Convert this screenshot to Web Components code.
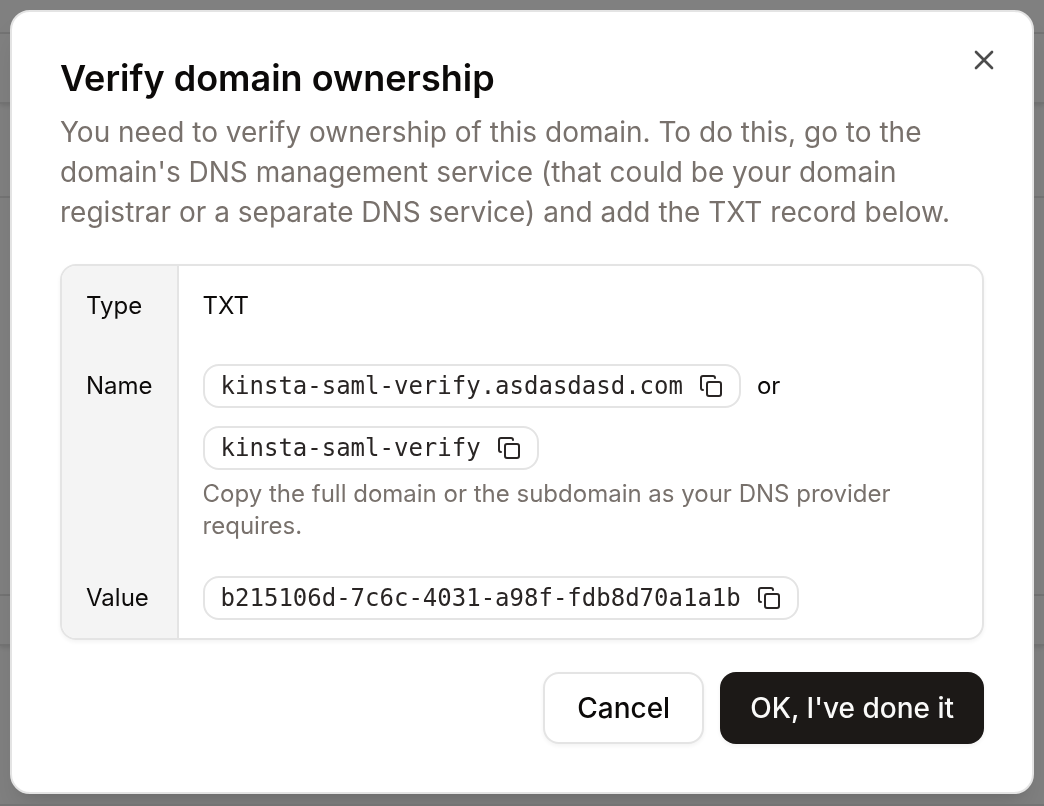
<!DOCTYPE html>
<html lang="en">
<head>
<meta charset="utf-8">
<meta name="viewport" content="width=device-width, initial-scale=1">
<title>Verify domain ownership</title>
<style>
    body {
        margin: 0;
        background: #808080;
        color: #0c0a09;
        font-family: Inter, "Liberation Sans", sans-serif;
        font-size: 24px;
        line-height: 32px;
    }
</style>
</head>
<body>
<page-backdrop></page-backdrop>
<modal-dialog>
    <span slot="title">Verify domain ownership</span>
    <span slot="description">You need to verify ownership of this domain. To do this, go to the domain's DNS management service (that could be your domain registrar or a separate DNS service) and add the TXT record below.</span>
    <dns-record type="TXT" host="kinsta-saml-verify" domain="asdasdasd.com" value="b215106d-7c6c-4031-a98f-fdb8d70a1a1b">
        Copy the full domain or the subdomain as your DNS provider requires.
    </dns-record>
    <dialog-button slot="actions">Cancel</dialog-button>
    <dialog-button slot="actions" primary>OK, I've done it</dialog-button>
</modal-dialog>

<script>
// Dimmed page rows that show around the edge of the dialog
class PageBackdrop extends HTMLElement {
    constructor() {
        super();
        this.attachShadow({mode: 'open'});
        this.shadowRoot.innerHTML = `
            <style>
                :host {
                    position: fixed;
                    inset: 0;
                    display: grid;
                    grid-template-rows: 34fr 70fr 94fr 398fr 50fr 160fr;
                }
                div {
                    border-bottom: 2px solid #747474;
                }
                .card {
                    box-shadow: 0 2px 4px #0000001a;
                }
            </style>
            <div></div>
            <div class="card"></div>
            <div></div>
            <div></div>
            <div class="card"></div>
            <div></div>
        `;
    }
}

class ModalDialog extends HTMLElement {
    constructor() {
        super();
        this.attachShadow({mode: 'open'});
        this.shadowRoot.innerHTML = `
            <style>
                :host {
                    display: block;
                    padding: 10px;
                }
                .dialog {
                    position: relative;
                    background: #fff;
                    border: 2px solid #e4e4e4;
                    border-radius: 20px;
                    padding: 48px;
                    box-shadow: 0 20px 30px -6px #0000001a, 0 8px 12px -8px #0000001a;
                    display: flex;
                    flex-direction: column;
                    gap: 32px;
                }
                header {
                    display: flex;
                    flex-direction: column;
                    gap: 16px;
                }
                h1 {
                    margin: 0;
                    font-size: 36px;
                    line-height: 36px;
                    font-weight: 600;
                }
                p {
                    margin: 0;
                    font-size: 28px;
                    line-height: 40px;
                    color: #78716c;
                }
                footer {
                    display: flex;
                    justify-content: flex-end;
                    gap: 16px;
                }
                .close {
                    position: absolute;
                    top: 32px;
                    right: 32px;
                    padding: 0;
                    border: 0;
                    background: none;
                    color: #4c4c4c;
                    cursor: pointer;
                }
                svg {
                    display: block;
                }
            </style>
            <section class="dialog" role="dialog" aria-labelledby="title" aria-describedby="description">
                <header>
                    <h1 id="title"><slot name="title"></slot></h1>
                    <p id="description"><slot name="description"></slot></p>
                </header>
                <slot></slot>
                <footer><slot name="actions"></slot></footer>
                <button class="close" type="button" aria-label="Close">
                    <svg width="32" height="32" viewBox="0 0 24 24" fill="none" stroke="currentColor" stroke-width="2" stroke-linecap="round" stroke-linejoin="round">
                        <path d="M18 6 6 18M6 6l12 12"/>
                    </svg>
                </button>
            </section>
        `;

        this.shadowRoot.querySelector('.close').addEventListener('click', () => this.close());
    }

    close() {
        this.remove();
    }
}

class DnsRecord extends HTMLElement {
    constructor() {
        super();
        this.attachShadow({mode: 'open'});
        const host = this.getAttribute('host');
        this.shadowRoot.innerHTML = `
            <style>
                :host {
                    display: block;
                    border: 2px solid #e4e4e4;
                    border-radius: 16px;
                    overflow: hidden;
                    box-shadow: 0 2px 4px #0000000d;
                }
                table {
                    width: 100%;
                    border-collapse: separate;
                    border-spacing: 0;
                }
                tr {
                    height: 80px;
                }
                th, td {
                    padding: 24px 24px 16px;
                    vertical-align: top;
                    text-align: left;
                    font-weight: 400;
                }
                th {
                    width: 1px;
                    background: #f4f4f4;
                    border-right: 2px solid #e4e4e4;
                }
                .copyable {
                    padding-top: 18px;
                }
                .names {
                    display: flex;
                    flex-wrap: wrap;
                    align-items: center;
                    gap: 18px 16px;
                }
                .hint {
                    margin: 8px 0 0;
                    color: #78716c;
                }
            </style>
            <table>
                <tr>
                    <th scope="row">Type</th>
                    <td>${this.getAttribute('type')}</td>
                </tr>
                <tr>
                    <th scope="row">Name</th>
                    <td class="copyable">
                        <div class="names">
                            <copy-chip>${host}.${this.getAttribute('domain')}</copy-chip>
                            <span>or</span>
                            <copy-chip>${host}</copy-chip>
                        </div>
                        <p class="hint"><slot></slot></p>
                    </td>
                </tr>
                <tr>
                    <th scope="row">Value</th>
                    <td class="copyable"><copy-chip>${this.getAttribute('value')}</copy-chip></td>
                </tr>
            </table>
        `;
    }
}

class CopyChip extends HTMLElement {
    constructor() {
        super();
        this.attachShadow({mode: 'open'});
        this.shadowRoot.innerHTML = `
            <style>
                :host {
                    display: flex;
                    align-items: center;
                    gap: 16px;
                    width: fit-content;
                    padding: 4px 16px;
                    border: 2px solid #e4e4e4;
                    border-radius: 16px;
                    color: #292524;
                }
                code {
                    font-family: "DejaVu Sans Mono", monospace;
                    font-size: 24px;
                    line-height: 32px;
                }
                button {
                    padding: 0;
                    border: 0;
                    background: none;
                    color: inherit;
                    cursor: pointer;
                }
                svg {
                    display: block;
                }
            </style>
            <code><slot></slot></code>
            <button type="button" aria-label="Copy">
                <svg width="24" height="24" viewBox="0 0 24 24" fill="none" stroke="currentColor" stroke-width="2" stroke-linecap="round" stroke-linejoin="round">
                    <rect x="8" y="8" width="14" height="14" rx="2"/>
                    <path d="M4 16c-1.1 0-2-.9-2-2V4c0-1.1.9-2 2-2h10c1.1 0 2 .9 2 2"/>
                </svg>
            </button>
        `;

        this.shadowRoot.querySelector('button').addEventListener('click', () => {
            navigator.clipboard.writeText(this.textContent);
        });
    }
}

class DialogButton extends HTMLElement {
    constructor() {
        super();
        this.attachShadow({mode: 'open'});
        this.shadowRoot.innerHTML = `
            <style>
                :host {
                    display: block;
                }
                button {
                    padding: 14px 32px;
                    border: 2px solid #e4e4e4;
                    border-radius: 16px;
                    background: #fff;
                    box-shadow: 0 2px 4px #0000000d;
                    color: #0c0a09;
                    font-family: inherit;
                    font-size: 28px;
                    font-weight: 500;
                    line-height: 40px;
                    display: block;
                    cursor: pointer;
                }
                :host([primary]) button {
                    padding: 16px 30px;
                    border: 0;
                    background: #1c1917;
                    color: #fafaf9;
                }
            </style>
            <button type="button"><slot></slot></button>
        `;
    }
}

customElements.define('page-backdrop', PageBackdrop);
customElements.define('modal-dialog', ModalDialog);
customElements.define('dns-record', DnsRecord);
customElements.define('copy-chip', CopyChip);
customElements.define('dialog-button', DialogButton);
</script>
</body>
</html>
